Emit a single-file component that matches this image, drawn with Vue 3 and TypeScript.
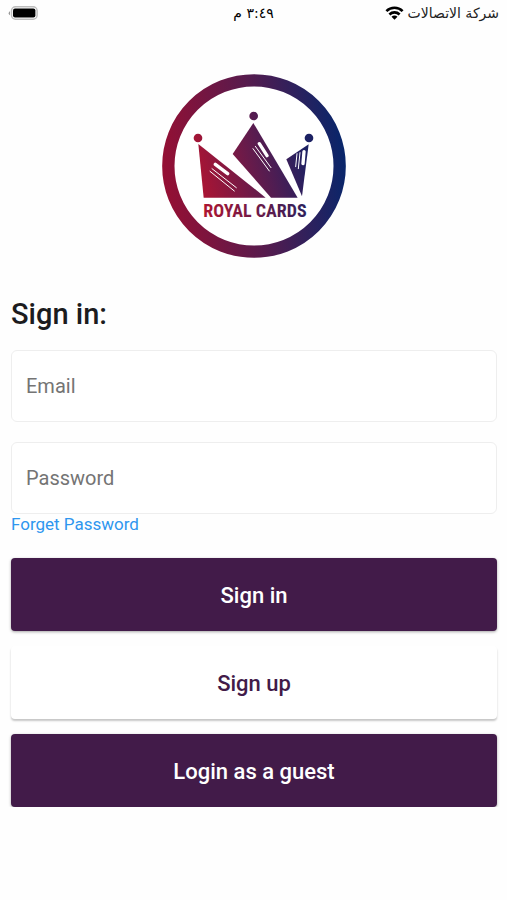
<script setup lang="ts">
import { ref } from 'vue'

const email = ref<string>('')
const password = ref<string>('')
</script>

<template>
  <div class="screen">
    <header class="status" dir="rtl" lang="ar">
      <div class="carrier">
        <span>شركة الاتصالات</span>
        <svg class="wifi" viewBox="0 0 18 14" aria-hidden="true">
          <g fill="none" stroke="#000" stroke-width="2.6">
            <path d="M0.9 5.1C5.4 0.6 12.6 0.6 17.1 5.1" />
            <path d="M3.9 8.5C6.8 5.7 11.2 5.7 14.1 8.5" />
          </g>
          <path d="M9 13.8L6 10.8C7.7 9.2 10.3 9.2 12 10.8Z" />
        </svg>
      </div>
      <span class="time">٣:٤٩ م</span>
      <div class="power">
        <svg class="battery" viewBox="0 0 30 14" aria-hidden="true">
          <path d="M2 5.2A2.2 2.2 0 0 0 2 9.2Z" fill="#999" />
          <rect x="3.5" y="0.8" width="25.6" height="12.4" rx="4" fill="#fff" stroke="#bdbdbd" stroke-width="1.5" />
          <rect x="5" y="2.4" width="22.4" height="9.2" rx="2" />
        </svg>
      </div>
    </header>

    <main class="content">
      <svg class="logo" viewBox="22 27 552 552" role="img" aria-label="Royal Cards">
        <defs>
          <linearGradient id="ring" gradientUnits="userSpaceOnUse" x1="22" y1="330" x2="574" y2="270">
            <stop offset="0" stop-color="#960f33" />
            <stop offset="0.5" stop-color="#581b4d" />
            <stop offset="1" stop-color="#07266b" />
          </linearGradient>
          <linearGradient id="crown" gradientUnits="userSpaceOnUse" x1="130" y1="370" x2="465" y2="290">
            <stop offset="0" stop-color="#ae1432" />
            <stop offset="0.5" stop-color="#661b4b" />
            <stop offset="1" stop-color="#1c2163" />
          </linearGradient>
        </defs>
        <circle cx="298" cy="303" r="257" fill="#fff" stroke="url(#ring)" stroke-width="37" />
        <g fill="url(#crown)">
          <circle cx="130" cy="219" r="13" />
          <circle cx="297" cy="153" r="13" />
          <circle cx="463" cy="219" r="13" />
          <path d="M131 237L333 398H147Z" />
          <path d="M296 174L429 398H349L234 267Z" />
          <path d="M462 238L442 394L395 283Z" />
          <text class="brand" x="301" y="455" text-anchor="middle">ROYAL CARDS</text>
        </g>
        <g stroke="#fff" stroke-linecap="round">
          <path d="M182 298L219 326M314 236L337 272M448 260L445 296" stroke-width="10" />
          <path d="M172 311L245 368M166 319L239 378M302 244L349 308M295 251L344 318M436 263L431 311M427 266L423 305" stroke-width="3" />
        </g>
      </svg>

      <form class="form" @submit.prevent>
        <h1 class="title">Sign in:</h1>
        <input v-model="email" class="field" type="email" placeholder="Email" aria-label="Email" />
        <input v-model="password" class="field second" type="password" placeholder="Password" aria-label="Password" />
        <a class="forgot" href="#">Forget Password</a>
        <div class="actions">
          <button class="btn" type="submit">Sign in</button>
          <button class="btn light" type="button">Sign up</button>
          <button class="btn" type="button">Login as a guest</button>
        </div>
      </form>
    </main>
  </div>
</template>

<style>
body {
  background: #fefefe;
}
</style>

<style scoped>
.screen {
  font-family: Roboto, 'Liberation Sans', sans-serif;
  color: #1c1c1e;
}
.status {
  display: grid;
  grid-template-columns: 1fr auto 1fr;
  align-items: center;
  height: 26px;
  padding: 0 8px;
  color: #222;
  font-family: 'DejaVu Sans', sans-serif;
  font-size: 14px;
}
.carrier {
  display: flex;
  align-items: center;
  gap: 4px;
}
.wifi {
  width: 19px;
  height: 14px;
}
.time {
  color: #000;
}
.power {
  display: flex;
  justify-content: flex-end;
}
.battery {
  width: 30px;
  height: 14px;
}
.content {
  display: flex;
  flex-direction: column;
  padding: 48px 10px 0 11px;
}
.logo {
  align-self: center;
  width: 184px;
  height: 184px;
}
.brand {
  font-family: 'Roboto Condensed', 'Liberation Sans Narrow', Roboto, sans-serif;
  font-size: 54px;
  font-weight: 700;
}
.form {
  display: flex;
  flex-direction: column;
}
.title {
  margin: 36px 0 16px;
  font-size: 29px;
  font-weight: 500;
  line-height: 40px;
}
.field {
  box-sizing: border-box;
  width: 100%;
  height: 72px;
  padding: 0 14px;
  border: 1px solid #eee;
  border-radius: 6px;
  background: #fff;
  color: #222;
  font-family: inherit;
  font-size: 20px;
}
.field::placeholder {
  color: #747474;
  opacity: 1;
}
.second {
  margin-top: 20px;
}
.forgot {
  align-self: flex-start;
  color: #2e96ef;
  font-size: 17px;
  line-height: 20px;
  text-decoration: none;
}
.actions {
  display: flex;
  flex-direction: column;
  gap: 15px;
  margin-top: 24px;
}
.btn {
  height: 73px;
  padding: 2px 16px 0;
  border: 0;
  border-radius: 4px;
  background: #421b49;
  box-shadow: 0 1px 3px rgba(0, 0, 0, 0.35);
  color: #fff;
  font-family: inherit;
  font-size: 22px;
  font-weight: 500;
}
.light {
  background: #fff;
  box-shadow: 0 2px 2px rgba(0, 0, 0, 0.22);
  color: #421b49;
}
</style>
